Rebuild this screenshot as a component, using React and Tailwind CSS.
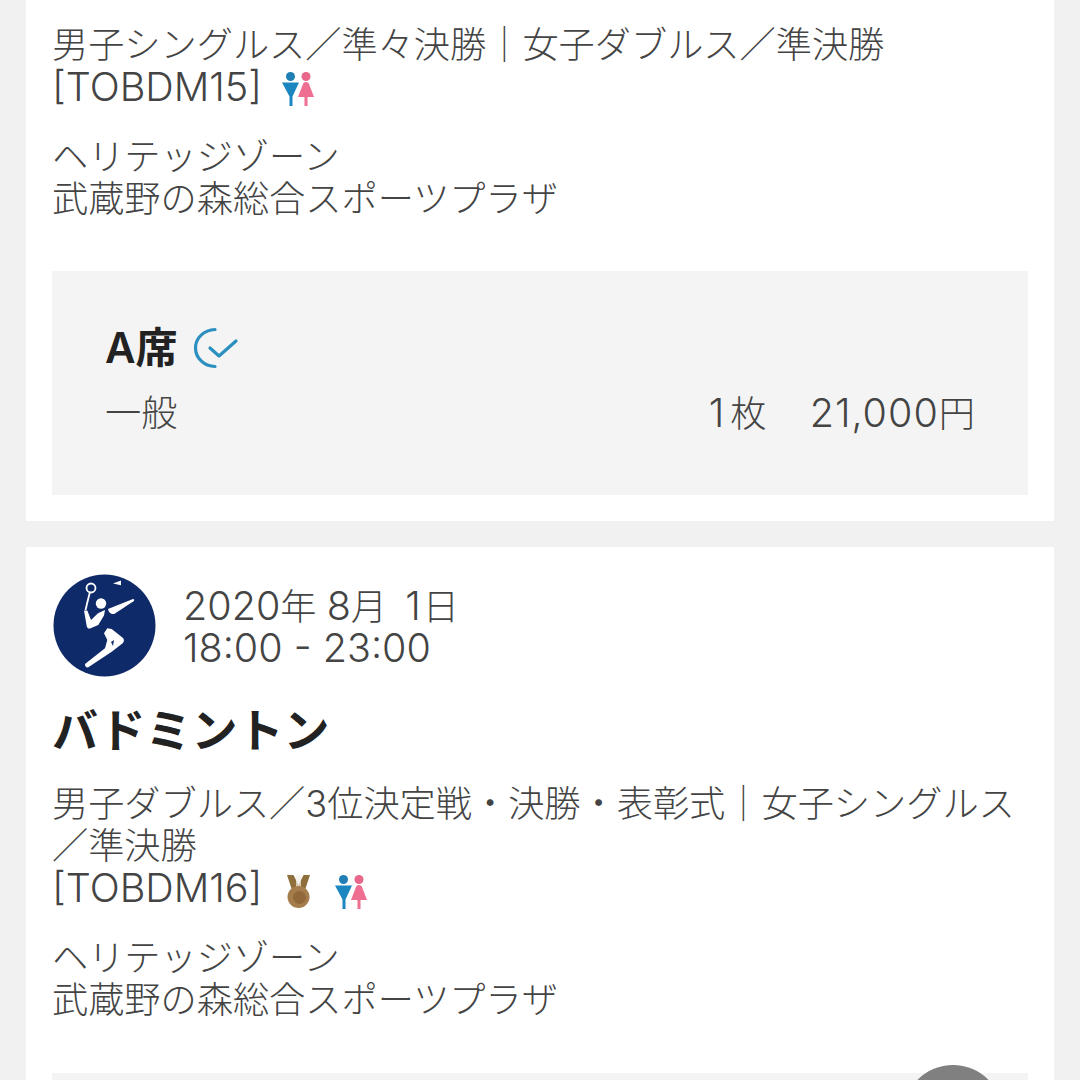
import React from "react";

const FONT = { fontFamily: 'Inter, "Noto Sans CJK JP", "Noto Sans", sans-serif' };

// Latin and digits run a little larger than the kana beside them
function L({ children, className = "" }) {
  return <span className={`text-[39.500px] ${className}`}>{children}</span>;
}

function Pair({ className }) {
  return (
    <svg width="32" height="34" viewBox="0 0 32 34" className={className}>
      <circle cx="8.500" cy="4.500" r="4.500" fill="#1f7fb5" />
      <path d="M0 10.500h17l-6.500 14V34H7.500v-9.500z" fill="#1b86bf" />
      <circle cx="24" cy="4.500" r="4.500" fill="#e8678a" />
      <path d="M24 10c1.800 0 2.700 1 3.300 2.800L32 25h-6.500v9h-3v-9H16l4.700-12.200C21.300 11 22.200 10 24 10z" fill="#ee6f8f" />
    </svg>
  );
}

function Medal({ className }) {
  return (
    <svg width="25" height="34" viewBox="0 0 25 34" className={className}>
      <path d="M1 0h6.500l5 10 5-10H24l-5 15H6z" fill="#8f6f3c" />
      <path d="M10 0h5v12h-5z" fill="#f3efe6" opacity="0.700" />
      <circle cx="12.500" cy="22" r="11" fill="#a57d4c" />
      <circle cx="13.500" cy="22.500" r="6.500" fill="#90683a" />
    </svg>
  );
}

// Olympic-style pictogram of a badminton player smashing
function BadmintonMark() {
  return (
    <svg width="103" height="103" viewBox="0 0 103 103" className="ml-px shrink-0">
      <circle cx="51.500" cy="51.500" r="51" fill="#0f2a68" />
      <circle cx="38" cy="14" r="4.500" fill="none" stroke="#fff" strokeWidth="1.800" />
      <path d="M36.800 18.500L32.500 36" stroke="#fff" strokeWidth="1.800" fill="none" />
      <g fill="#fff">
        <path d="M60 9.500L68 6.500V11.200z" />
        <circle cx="48" cy="29.500" r="5.200" />
        <path d="M55 35L80 25c1.500 0 1.500 1.500 .5 2.200L62 39.500c-3 1.500-6 0-7-4.500z" />
        <path d="M31 36.500h3.300L38 46l7-6.700L52 36l-1 5.500L45.300 51 37 54.500c-2 .3-3-.7-3.300-2.500z" />
        <path d="M54.300 54.300L58.700 55 70.300 64.300c1 2 .8 3.500-.6 5L58.700 77.700 35.300 93.300c-2 .5-3.500-1-3.300-3.300L52 74.300 54.300 66 51 59.300z" />
      </g>
      <path d="M58 68l3 -2 -1 6z" fill="#0f2a68" />
    </svg>
  );
}

function Venue() {
  return (
    <div className="mt-[28px] leading-[42px]">
      <div>ヘリテッジゾーン</div>
      <div>武蔵野の森総合スポーツプラザ</div>
    </div>
  );
}

export default function App() {
  return (
    <div
      className="h-[1080px] w-[1080px] overflow-hidden bg-[#f1f1f1] px-[26px] text-[36.200px] font-light text-[#444444]"
      style={FONT}
    >
      <section className="bg-white px-[26px] pt-[24px] pb-[26px]">
        <div className="leading-[42px] whitespace-nowrap">男子シングルス／準々決勝｜女子ダブルス／準決勝</div>
        <div className="flex items-center gap-[20px] leading-[42px]">
          <L>[TOBDM15]</L>
          <Pair className="mt-[4px]" />
        </div>
        <Venue />
        <div className="mt-[51px] h-[224px] bg-[#f4f4f4] pl-[53px] pr-[53px] pt-[54px]">
          <div className="flex items-center gap-[15px] text-[42px] leading-[46px] font-semibold text-[#222222]">
            <span>A席</span>
            <svg width="46" height="42" viewBox="0 0 46 42" fill="none">
              <path d="M22 2.500C11 3 2.500 11 2.500 21S11 39 22 39.500" stroke="#2b8fc0" strokeWidth="3.200" strokeLinecap="round" />
              <path d="M17 21l9 8 17-15" stroke="#2b8fc0" strokeWidth="3.200" strokeLinecap="round" strokeLinejoin="round" />
            </svg>
          </div>
          <div className="mt-[21px] flex justify-between leading-[42px]">
            <span>一般</span>
            <span className="whitespace-pre">
              <L className="mr-[6px]">1</L>枚　<L className="ml-[7px] tracking-[1px]">21,000</L>円
            </span>
          </div>
        </div>
      </section>

      <section className="mt-[26px] bg-white px-[26px] pt-[27px] pb-0 h-[600px]">
        <div className="flex items-center gap-[27px]">
          <BadmintonMark />
          <div className="mt-[4px] leading-[41px] whitespace-pre">
            <div><L>2020</L>年 <L>8</L>月 <L className="ml-[8px] mr-[2px]">1</L>日</div>
            <div><L>18:00 - 23:00</L></div>
          </div>
        </div>
        <h2 className="mt-[28px] text-[46px] leading-[50px] font-bold text-[#222222]">バドミントン</h2>
        <div className="mt-[28px] leading-[42px]">
          <div className="whitespace-nowrap">男子ダブルス／3位決定戦・決勝・表彰式｜女子シングルス</div>
          <div>／準決勝</div>
          <div className="flex items-center gap-[24px]">
            <L>[TOBDM16]</L>
            <Medal className="mt-[8px]" />
            <Pair className="mt-[8px]" />
          </div>
        </div>
        <Venue />
        <div className="relative mt-[52px] h-[100px] bg-[#f4f4f4]">
          <div className="absolute right-[25px] top-[-8px] h-[100px] w-[100px] rounded-full bg-[#808080]" />
        </div>
      </section>
    </div>
  );
}
